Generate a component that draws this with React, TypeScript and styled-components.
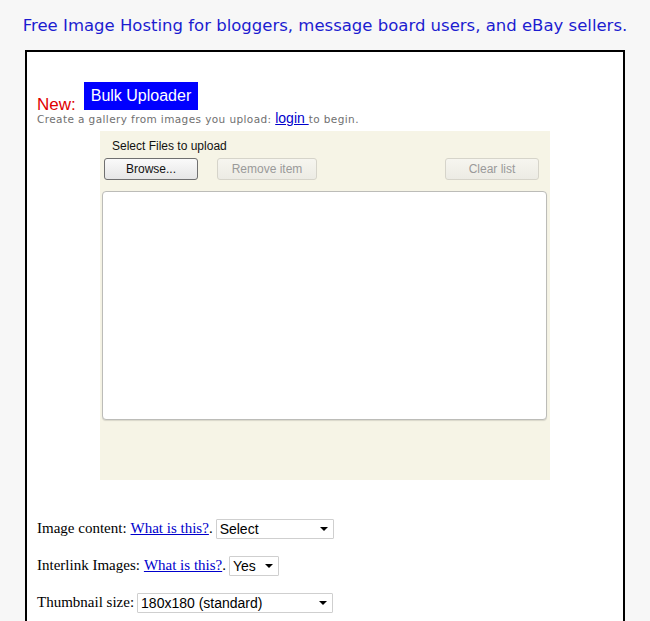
import React from "react";
import styled, { createGlobalStyle } from "styled-components";

const Global = createGlobalStyle`
  html, body { margin: 0; padding: 0; background: #f7f7f7; }
  body { font-family: "Liberation Serif", "Times New Roman", serif; font-size: 16px; color: #000; }
`;

const Page = styled.div`
  width: 650px;
  height: 621px;
  overflow: hidden;
`;

const Title = styled.div`
  font-family: "DejaVu Sans", Verdana, sans-serif;
  font-size: 16.5px;
  color: #1c1cd0;
  text-align: center;
  padding-top: 16px;
  height: 50px;
  box-sizing: border-box;
  white-space: nowrap;
`;

const Box = styled.div`
  margin-left: 25px;
  width: 576px;
  border: 2px solid #000;
  background: #fff;
  padding: 30px 10px 40px 10px;
  box-sizing: content-box;
`;

const Headline = styled.div`
  display: flex;
  align-items: flex-end;
  gap: 8px;
`;

const NewLabel = styled.span`
  font-family: "Liberation Sans", Arial, sans-serif;
  font-size: 17px;
  color: #e00000;
  line-height: 17px;
  margin-bottom: -3px;
`;

const Badge = styled.span`
  background: #0000ff;
  color: #fff;
  font-family: "Liberation Sans", Arial, sans-serif;
  font-size: 16px;
  line-height: 28px;
  height: 28px;
  padding: 0 7px;
`;

const SubLine = styled.div`
  font-family: "DejaVu Sans", Verdana, sans-serif;
  font-size: 10.5px;
  letter-spacing: 0.4px;
  color: #707070;
  line-height: 16px;
`;

const LoginLink = styled.a`
  font-family: "Liberation Sans", Arial, sans-serif;
  font-size: 14px;
  letter-spacing: 0;
  color: #0000cc;
  text-decoration: underline;
`;

const Uploader = styled.div`
  width: 450px;
  height: 349px;
  margin: 4px auto 0 auto;
  background: #f6f4e6;
  box-sizing: border-box;
  padding: 8px 2px 0 2px;
  display: flex;
  flex-direction: column;
  font-family: "Liberation Sans", Arial, sans-serif;
`;

const UploaderLabel = styled.div`
  font-size: 12px;
  color: #111;
  padding-left: 10px;
  line-height: 14px;
  height: 19px;
`;

const ButtonRow = styled.div`
  display: flex;
  align-items: center;
  gap: 19px;
  padding: 0 9px 0 2px;
`;

const Spacer = styled.div`
  flex: 1;
`;

const Btn = styled.button<{ $w: number; $disabled?: boolean }>`
  width: ${(p) => p.$w}px;
  height: 22px;
  box-sizing: border-box;
  border-radius: 3px;
  font-family: "Liberation Sans", Arial, sans-serif;
  font-size: 12px;
  padding: 0;
  border: 1px solid ${(p) => (p.$disabled ? "#d6d4ca" : "#707070")};
  color: ${(p) => (p.$disabled ? "#9a9a9a" : "#111")};
  background: ${(p) =>
    p.$disabled
      ? "linear-gradient(#f6f5ef, #ecebe4)"
      : "linear-gradient(#fafafa, #e6e6e6)"};
`;

const FileList = styled.div`
  margin-top: 11px;
  width: 445px;
  height: 229px;
  box-sizing: border-box;
  border: 1px solid #bcbcb8;
  border-radius: 4px;
  background: #fff;
  box-shadow: 0 1px 1px rgba(0, 0, 0, 0.12);
`;

const Form = styled.div`
  padding-top: 22px;
`;

const Row = styled.p`
  margin: 16px 0;
  line-height: 21px;
  font-size: 15px;
  font-family: "Liberation Serif", "Times New Roman", serif;
  display: flex;
  align-items: center;
  white-space: nowrap;
`;

const HelpLink = styled.a`
  color: #0000cc;
  text-decoration: underline;
  margin-left: 4px;
`;

const SelectWrap = styled.span<{ $w: number; $gap?: number }>`
  position: relative;
  display: inline-block;
  width: ${(p) => p.$w}px;
  height: 20px;
  margin-left: ${(p) => p.$gap ?? 3}px;
  &::after {
    content: "";
    position: absolute;
    right: 6px;
    top: 8px;
    border-left: 4px solid transparent;
    border-right: 4px solid transparent;
    border-top: 4px solid #000;
    pointer-events: none;
  }
`;

const Select = styled.select`
  appearance: none;
  -webkit-appearance: none;
  width: 100%;
  height: 20px;
  box-sizing: border-box;
  border: 1px solid #cfcfcf;
  border-radius: 1px;
  background: #fff;
  font-family: "Liberation Sans", Arial, sans-serif;
  font-size: 14px;
  color: #000;
  padding: 0 0 0 3px;
  margin: 0;
  outline: none;
`;

export default function App() {
  return (
    <Page>
      <Global />
      <Title>Free Image Hosting for bloggers, message board users, and eBay sellers.</Title>
      <Box>
        <Headline>
          <NewLabel>New:</NewLabel>
          <Badge>Bulk Uploader</Badge>
        </Headline>
        <SubLine>
          Create a gallery from images you upload: <LoginLink href="#">login </LoginLink>to begin.
        </SubLine>
        <Uploader>
          <UploaderLabel>Select Files to upload</UploaderLabel>
          <ButtonRow>
            <Btn $w={94}>Browse...</Btn>
            <Btn $w={100} $disabled>Remove item</Btn>
            <Spacer />
            <Btn $w={94} $disabled>Clear list</Btn>
          </ButtonRow>
          <FileList />
        </Uploader>
        <Form>
          <Row>
            Image content: <HelpLink href="#">What is this?</HelpLink>.
            <SelectWrap $w={118}>
              <Select defaultValue="select">
                <option value="select">Select</option>
                <option value="family">Family Safe</option>
                <option value="adult">Adult</option>
              </Select>
            </SelectWrap>
          </Row>
          <Row>
            Interlink Images: <HelpLink href="#">What is this?</HelpLink>.
            <SelectWrap $w={50}>
              <Select defaultValue="yes">
                <option value="yes">Yes</option>
                <option value="no">No</option>
              </Select>
            </SelectWrap>
          </Row>
          <Row>
            Thumbnail size:
            <SelectWrap $w={196}>
              <Select defaultValue="180">
                <option value="180">180x180 (standard)</option>
                <option value="100">100x100</option>
              </Select>
            </SelectWrap>
          </Row>
        </Form>
      </Box>
    </Page>
  );
}
